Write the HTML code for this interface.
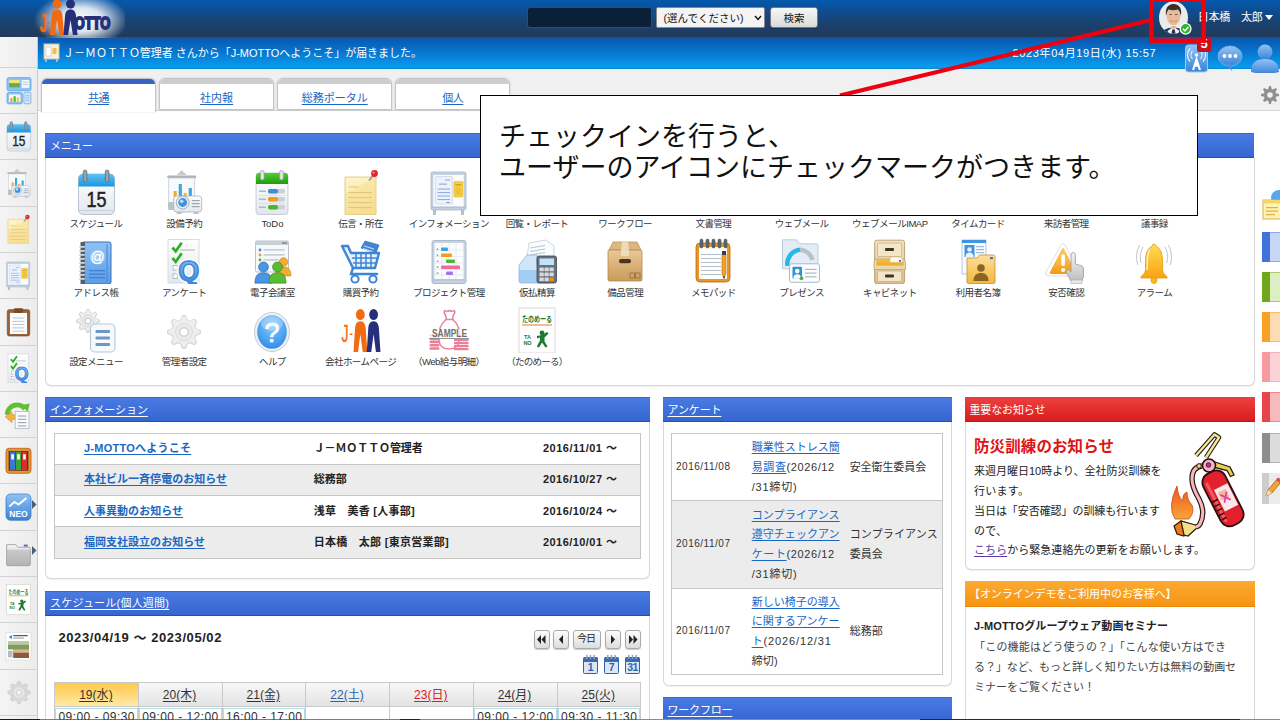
<!DOCTYPE html>
<html lang="ja">
<head>
<meta charset="utf-8">
<title>J-MOTTO</title>
<style>
*{box-sizing:border-box;margin:0;padding:0}
html,body{width:1280px;height:720px;overflow:hidden;background:#fff}
body{font-family:"Liberation Sans","Noto Sans CJK JP",sans-serif;font-size:11px;color:#222;position:relative}
a{color:#1a66c4;text-decoration:underline}
.abs,.t,svg.i{position:absolute}
.t{white-space:nowrap;line-height:20px;height:20px}
.t.c{text-align:center}
.b{font-weight:bold}
.ml{letter-spacing:-.55px}
.u{text-decoration:underline;text-underline-offset:1.5px}
#top{left:0;top:0;width:1280px;height:38px;background:linear-gradient(#0459ad 0,#0c4f98 22%,#1a426f 60%,#22395a 100%)}
#bar{left:37px;top:37px;width:1243px;height:32px;background:linear-gradient(#1b4f8a 0,#0a5ab0 6%,#0674cf 45%,#0a9ced 94%,#0c83c8 100%)}
#side{left:0;top:37px;width:38px;height:683px;background:linear-gradient(90deg,#f4f4f4,#ececec);border-right:1px solid #c9c9c9}
#side i{position:absolute;left:0;width:37px;height:1px;background:#d2d2d2}
#tabbg{left:38px;top:69px;width:1242px;height:42px;background:linear-gradient(#e9f3f9 0,#f0f0f0 3px);border-bottom:1px solid #d4d4d4}
.tab{top:78px;width:115px;height:33px;background:#fff;border:1px solid #c4c4c4;border-bottom:none;border-radius:6px 6px 0 0;overflow:hidden;box-shadow:0 0 2px rgba(0,0,0,.15)}
.tab:before{content:"";position:absolute;left:0;top:0;width:100%;height:5px;background:#cdcdcd}
.tab{height:32px;border-bottom:1px solid #c4c4c4}
.tab.on{height:34px;border-bottom:none}
.tab.on:before{background:#3a62c4}
.ph{height:25px;background:linear-gradient(#4a7be3,#3565d0);box-shadow:inset 0 -1px 0 rgba(20,50,140,.45),inset 0 1px 0 rgba(20,50,140,.25)}
.pb{border:1px solid #d9d9d9;border-top:none;border-radius:0 0 6px 6px;background:#fff;box-shadow:0 1px 1px rgba(0,0,0,.06)}
.tb{border:1px solid #c6c6c6;background:#fff}
.tb i{position:absolute;left:0;width:100%;display:block}
.g{background:#ececec}
.btn{border:1px solid #a9a9a9;border-radius:3px;background:linear-gradient(#fdfdfd,#dcdcdc);box-shadow:0 1px 1px rgba(0,0,0,.2)}
</style>
</head>
<body>

<div id="top" class="abs"></div>
<div id="bar" class="abs"></div>
<div id="side" class="abs"><i style="top:29.7px"></i><i style="top:76.0px"></i><i style="top:122.3px"></i><i style="top:168.6px"></i><i style="top:214.9px"></i><i style="top:261.2px"></i><i style="top:307.5px"></i><i style="top:353.8px"></i><i style="top:400.1px"></i><i style="top:446.4px"></i><i style="top:492.7px"></i><i style="top:539.0px"></i><i style="top:585.3px"></i><i style="top:631.6px"></i><i style="top:677.9px"></i></div>
<svg width="0" height="0" style="position:absolute"><defs>
<linearGradient id="gBlue" x1="0" y1="0" x2="0" y2="1"><stop offset="0" stop-color="#6fc3f2"/><stop offset="1" stop-color="#2f8fdb"/></linearGradient>
<linearGradient id="gBlue2" x1="0" y1="0" x2="0" y2="1"><stop offset="0" stop-color="#8fc4f5"/><stop offset="1" stop-color="#3b82d6"/></linearGradient>
<linearGradient id="gGreen" x1="0" y1="0" x2="0" y2="1"><stop offset="0" stop-color="#7ed957"/><stop offset="1" stop-color="#3d9b1f"/></linearGradient>
<linearGradient id="gWhite" x1="0" y1="0" x2="0" y2="1"><stop offset="0" stop-color="#ffffff"/><stop offset="1" stop-color="#e3e7ec"/></linearGradient>
<linearGradient id="gYel" x1="0" y1="0" x2="1" y2="1"><stop offset="0" stop-color="#fff2b8"/><stop offset="1" stop-color="#f7d774"/></linearGradient>
<linearGradient id="gGray" x1="0" y1="0" x2="0" y2="1"><stop offset="0" stop-color="#f2f2f2"/><stop offset="1" stop-color="#bdbdbd"/></linearGradient>
<linearGradient id="gOr" x1="0" y1="0" x2="0" y2="1"><stop offset="0" stop-color="#ffd36b"/><stop offset="1" stop-color="#f39a12"/></linearGradient>
<linearGradient id="gFo" x1="0" y1="0" x2="0" y2="1"><stop offset="0" stop-color="#fde09a"/><stop offset="1" stop-color="#f4b73e"/></linearGradient>
<linearGradient id="gBell" x1="0" y1="0" x2="0" y2="1"><stop offset="0" stop-color="#ffdc55"/><stop offset="1" stop-color="#f9a312"/></linearGradient>
<linearGradient id="gBox" x1="0" y1="0" x2="0" y2="1"><stop offset="0" stop-color="#e9c896"/><stop offset="1" stop-color="#c99a5b"/></linearGradient>
<linearGradient id="gBeige" x1="0" y1="0" x2="0" y2="1"><stop offset="0" stop-color="#f3e3c2"/><stop offset="1" stop-color="#d9bd8a"/></linearGradient>
<radialGradient id="gGlow"><stop offset="0" stop-color="#fff" stop-opacity="1"/><stop offset=".45" stop-color="#fff" stop-opacity=".85"/><stop offset="1" stop-color="#fff" stop-opacity="0"/></radialGradient>
<radialGradient id="gHelp" cx=".5" cy=".3" r=".8"><stop offset="0" stop-color="#86ccff"/><stop offset="1" stop-color="#2684e2"/></radialGradient>
</defs></svg><svg class="i" style="left:35.0px;top:0.0px" width="90" height="38" viewBox="0 0 90 38" ><ellipse cx="46" cy="20" rx="47" ry="27" fill="url(#gGlow)"/><text x="4.800" y="31.500" font-size="25" font-weight="bold" fill="#f26a12" stroke="#f26a12" stroke-width=".7" font-family="Liberation Sans,Noto Sans CJK JP,sans-serif" textLength="7" lengthAdjust="spacingAndGlyphs">J</text><rect x="12.800" y="22.500" width="2.200" height="1.500" fill="#f26a12"/><g transform="translate(15 -1) scale(1.0 1.0)"><circle cx="7" cy="5" r="4.500" fill="#f26a12"/><circle cx="20.500" cy="5" r="4.500" fill="#26307a"/><path d="M7 10.500c3.800 0 5 2.600 5.400 5.600l1.600 19.900h-4.600l-2.400-15-2.400 15h-4.600l1.600-19.900c.4-3 1.600-5.600 5.400-5.600z" fill="#f26a12"/><path d="M20.500 10.500c3.800 0 5 2.600 5.400 5.600l1.600 19.900h-4.600l-2.400-15-2.400 15h-4.600l1.600-19.900c.4-3 1.600-5.600 5.400-5.600z" fill="#26307a"/></g><text x="39.500" y="29.300" font-size="17" font-weight="bold" fill="#26307a" stroke="#26307a" stroke-width="1.900" font-family="Liberation Sans,Noto Sans CJK JP,sans-serif" textLength="36" lengthAdjust="spacingAndGlyphs">OTTO</text></svg>
<div class="abs" style="left:527px;top:7px;width:125px;height:21px;background:#0a2039;border:1px solid #2b4c7c;border-radius:3px"></div>
<div class="abs" style="left:656px;top:7px;width:109px;height:21px;background:#f4f4f4;border:1px solid #8a8a8a;border-radius:2px"></div>
<svg class="i" style="left:754px;top:14px" width="8" height="8"><path d="M1 2l3 3.5L7 2" fill="none" stroke="#111" stroke-width="1.4"/></svg>
<div class="abs btn" style="left:770px;top:7px;width:48px;height:21px;border-color:#777;background:linear-gradient(#f6f6f6,#dadada)"></div>
<svg class="i" style="left:1158.0px;top:1.0px" width="36" height="36" viewBox="0 0 36 36" ><defs><clipPath id="cpA"><ellipse cx="15.500" cy="16.500" rx="14.500" ry="16.300"/></clipPath></defs><g clip-path="url(#cpA)"><rect width="32" height="36" fill="#ebebeb"/><path d="M3 36q0-9.500 12.500-9.500T28 36z" fill="#1d3558"/><path d="M9.500 30l6-4.500 6 4.500-2.500 4h-7z" fill="#f6f6f6"/><path d="M13 25l2.500 4.500 2.500-4.500z" fill="#e3b595"/><path d="M14.300 28.500h2.400l1.300 6h-5z" fill="#2b3550"/><ellipse cx="15.500" cy="15.500" rx="6.800" ry="8.800" fill="#e8bb9c"/><path d="M8 15q-1.500-11.500 7.500-12Q24.500 3.500 23 15q-1-4.500-3-6.500-5 1.500-9.500 0-1.500 2-2.500 6.500z" fill="#3b2f29"/><path d="M12 19.800q3.500 3 7 0-3.500 1-7 0z" fill="#fff" stroke="#b06f5a" stroke-width=".5"/><path d="M11.500 13.500h2.500M17 13.500h2.500" stroke="#4a3a32" stroke-width=".8"/></g><circle cx="27.600" cy="27.750" r="6" fill="#fff"/><circle cx="27.600" cy="27.750" r="4.700" fill="#2db52d"/><path d="M25 27.800l2 2.200 3.300-4" fill="none" stroke="#fff" stroke-width="1.400"/></svg>
<svg class="i" style="left:1265px;top:15px" width="9" height="6"><path d="M0 0h8L4 5z" fill="#fff"/></svg>
<svg class="i" style="left:43.0px;top:43.0px" width="17" height="20" viewBox="0 0 17 20" ><rect x="1" y="1" width="15" height="15" fill="#f3f1e6" stroke="#c9c2a4" stroke-width="1"/><rect x="3" y="4" width="5" height="9" fill="#fff" stroke="#b9b9b9" stroke-width=".5"/><rect x="9.500" y="5" width="4" height="6" fill="#f3c23c"/><rect x="2" y="16" width="1.800" height="3" fill="#b9b9b9"/><rect x="13" y="16" width="1.800" height="3" fill="#b9b9b9"/></svg>
<svg class="i" style="left:6.0px;top:75.7px" width="26" height="29.5" viewBox="0 0 24 26" preserveAspectRatio="none"><rect x="1" y="1.500" width="22" height="11.500" rx="1.500" fill="#8ec2f2" stroke="#5fa4e6" stroke-width=".8"/><rect x="2.800" y="3.500" width="10" height="6.500" fill="#5fb04a"/><rect x="2.800" y="3.500" width="10" height="2.800" fill="#f6e27a"/><rect x="14.500" y="3.500" width="7" height="7" fill="#f3f7fb"/><rect x="15.500" y="5" width="5" height=".8" fill="#b9c9da"/><rect x="15.500" y="7" width="5" height=".8" fill="#b9c9da"/><rect x="1" y="14.500" width="14" height="10" rx="1.500" fill="#8ec2f2" stroke="#5fa4e6" stroke-width=".8"/><rect x="2.800" y="16.300" width="10.500" height="6.500" fill="#f3f8fd"/><rect x="4" y="19.500" width="2" height="3.300" fill="#f29a1c"/><rect x="7" y="17.800" width="2" height="5" fill="#4cb52e"/><rect x="10" y="18.800" width="2" height="4" fill="#f6c92a"/><rect x="16.500" y="14.500" width="6.500" height="10" rx="1" fill="#cfe2f6" stroke="#7fb4ea" stroke-width=".8"/><rect x="18" y="17" width="3.500" height=".8" fill="#9dbbe0"/><rect x="18" y="19" width="3.500" height=".8" fill="#9dbbe0"/><rect x="18" y="21" width="3.500" height=".8" fill="#9dbbe0"/></svg><svg class="i" style="left:4.3px;top:121.3px" width="29" height="30.3" viewBox="0 0 44 46" ><defs><linearGradient id="gCal" x1="0" y1="0" x2="0" y2="1"><stop offset="0" stop-color="#5cc4f6"/><stop offset="1" stop-color="#1f93df"/></linearGradient></defs><rect x="4.500" y="5" width="36" height="40.500" rx="4.500" fill="url(#gWhite)" stroke="#b3bec9" stroke-width=".9"/><path d="M4.500 17.500V9.500a4.500 4.500 0 0 1 4.500-4.500h27a4.500 4.500 0 0 1 4.500 4.500v8z" fill="url(#gCal)"/><rect x="4.500" y="41" width="36" height="1" fill="#c9d2da"/><rect x="9.300" y="1" width="3.600" height="12" rx="1.800" fill="#9aa3ab" stroke="#5a626a" stroke-width=".7"/><rect x="31.300" y="1" width="3.600" height="12" rx="1.800" fill="#9aa3ab" stroke="#5a626a" stroke-width=".7"/><text x="22.500" y="38" text-anchor="middle" font-size="21.500" fill="#222" stroke="#222" stroke-width=".5" font-family="Liberation Sans,Noto Sans CJK JP,sans-serif" textLength="20" lengthAdjust="spacingAndGlyphs">15</text></svg><svg class="i" style="left:4.3px;top:167.6px" width="29" height="30.3" viewBox="0 0 44 46" ><g transform="translate(-1.300 0)"><path d="M21 1l5 5h-10z" fill="#c8ccd0"/><rect x="6.500" y="6.500" width="29" height="2.500" rx="1" fill="#aab1b8"/><rect x="8" y="9" width="26" height="29" fill="#f7f9fb" stroke="#c5cbd1" stroke-width=".8"/><rect x="13" y="22" width="3" height="9" fill="#f4a62a"/><rect x="18" y="15" width="3.200" height="16" fill="#39a9e0"/><rect x="23" y="24" width="3" height="7" fill="#f4b63a"/><rect x="28" y="19" width="3.200" height="12" fill="#39a9e0"/><rect x="7.500" y="33" width="6" height="8" fill="#b9c1c9"/><rect x="13" y="27" width="28" height="16" rx="3" fill="url(#gWhite)" stroke="#aab2ba" stroke-width=".8"/><rect x="16" y="43" width="5" height="2" fill="#b9c1c9"/><rect x="33" y="43" width="5" height="2" fill="#b9c1c9"/><circle cx="22" cy="33.500" r="6.500" fill="#e6ecf3" stroke="#93a0ad" stroke-width=".8"/><circle cx="22" cy="33.500" r="4.400" fill="#3c93e0"/><circle cx="21" cy="32.300" r="1.800" fill="#bfe0fb"/><rect x="31" y="31" width="8" height="1.200" fill="#9aa4ae"/><rect x="31" y="34" width="8" height="1.200" fill="#9aa4ae"/><rect x="31" y="37" width="8" height="1.200" fill="#9aa4ae"/></g></svg><svg class="i" style="left:4.3px;top:213.9px" width="29" height="30.3" viewBox="0 0 44 46" ><defs><linearGradient id="gMm" x1="0" y1="0" x2=".3" y2="1"><stop offset="0" stop-color="#fef6cf"/><stop offset="1" stop-color="#f8e096"/></linearGradient></defs><path d="M6 8h31v37.500H6z" fill="url(#gMm)" stroke="#dcc377" stroke-width=".8"/><path d="M6 25L37 8v37.500H6z" fill="#f7dc8c" opacity=".45"/><rect x="9.500" y="17.4" width="10" height="1.100" fill="#dfc77d"/><rect x="9.500" y="23" width="23.5" height="1.100" fill="#dfc77d"/><rect x="9.500" y="28" width="23.5" height="1.100" fill="#dfc77d"/><rect x="9.500" y="33" width="23.5" height="1.100" fill="#dfc77d"/><rect x="9.500" y="38" width="23.5" height="1.100" fill="#dfc77d"/><path d="M30 11.500l4-5" stroke="#9a9a9a" stroke-width="1.800"/><circle cx="35.500" cy="4.500" r="3.400" fill="#e3262c"/><circle cx="34.600" cy="3.600" r="1.100" fill="#ff8f8f"/></svg><svg class="i" style="left:4.3px;top:260.2px" width="29" height="30.3" viewBox="0 0 44 46" ><rect x="6" y="40" width="3" height="6" fill="#b4c1cf"/><rect x="34" y="40" width="3" height="6" fill="#b4c1cf"/><rect x="4" y="3" width="35" height="38" rx="1.500" fill="#c3d0df" stroke="#a3b3c6" stroke-width=".7"/><rect x="6.300" y="6" width="30.400" height="32" fill="#fbfcfe"/><rect x="4" y="37.500" width="35" height="1.200" fill="#aebccd"/><rect x="8.300" y="7.500" width="17" height="27.500" rx="1" fill="#edf3fc" stroke="#bccbe0" stroke-width=".6"/><rect x="18" y="10.500" width="5" height="1" fill="#8aa6d6"/><rect x="12" y="14.500" width="8" height="1.300" fill="#9fb2cc"/><rect x="10.500" y="19.5" width="12.500" height="1.100" fill="#8fb0dc"/><rect x="10.500" y="23" width="12.500" height="1.100" fill="#8fb0dc"/><rect x="10.500" y="26.5" width="12.500" height="1.100" fill="#8fb0dc"/><rect x="10.500" y="30" width="12.500" height="1.100" fill="#8fb0dc"/><rect x="19" y="33" width="4" height="1" fill="#8aa6d6"/><rect x="26.800" y="12.400" width="9.200" height="15.600" rx=".8" fill="#f6d044" stroke="#e0b32a" stroke-width=".5"/><rect x="28.500" y="15" width="5.800" height="1.600" fill="#d9a521"/><rect x="28.500" y="18.500" width="5.800" height="7" fill="#eec136"/></svg><svg class="i" style="left:4.3px;top:306.5px" width="29" height="30.3" viewBox="0 0 44 46" ><rect x="5" y="4" width="34" height="40" rx="3" fill="#9a6236" stroke="#6f4322" stroke-width="1"/><rect x="9" y="9" width="26" height="32" fill="#fdfdfd"/><rect x="15" y="2" width="14" height="7" rx="2" fill="#7a4a26"/><rect x="13" y="16" width="18" height="1.400" fill="#b9c0c7"/><rect x="13" y="21" width="18" height="1.400" fill="#b9c0c7"/><rect x="13" y="26" width="18" height="1.400" fill="#b9c0c7"/><rect x="13" y="31" width="18" height="1.400" fill="#b9c0c7"/><rect x="13" y="36" width="18" height="1.400" fill="#b9c0c7"/></svg><svg class="i" style="left:4.3px;top:352.8px" width="29" height="30.3" viewBox="0 0 44 46" ><rect x="6" y="1.500" width="31" height="43.500" fill="url(#gWhite)" stroke="#cdd4db" stroke-width=".8"/><path d="M10.500 9.500l3.200 3.800 6-8.500" fill="none" stroke="#2fb027" stroke-width="2.800"/><path d="M10.500 20l3.200 3.800 6-8.500" fill="none" stroke="#2fb027" stroke-width="2.800"/><rect x="18" y="11.500" width="15" height="1" fill="#aab4be"/><rect x="20" y="21.500" width="10" height="1" fill="#aab4be"/><rect x="11" y="27.500" width="4.500" height="4.500" fill="#fff" stroke="#9ab0ca" stroke-width=".8"/><rect x="11" y="36" width="4.500" height="4.500" fill="#fff" stroke="#9ab0ca" stroke-width=".8"/><text x="26.800" y="41.500" text-anchor="middle" font-size="27" font-weight="bold" fill="#fff" stroke="#fff" stroke-width="5" stroke-linejoin="round" font-family="Liberation Sans,Noto Sans CJK JP,sans-serif">Q</text><text x="26.800" y="41.500" text-anchor="middle" font-size="27" font-weight="bold" fill="url(#gBlue2)" stroke="#3f88da" stroke-width="1.500" stroke-linejoin="round" font-family="Liberation Sans,Noto Sans CJK JP,sans-serif">Q</text></svg><svg class="i" style="left:4.3px;top:399.1px" width="29" height="30.3" viewBox="0 0 44 46" ><path d="M5 24a15 15 0 0 1 27-9" fill="none" stroke="#5fbf35" stroke-width="7.500"/><path d="M27 9l12-2-3 13z" fill="#5fbf35"/><path d="M2 27l10-8v5h8v7h-8v5z" fill="#f4b23c" stroke="#d08a14" stroke-width=".8"/><rect x="17" y="19" width="21" height="26" fill="#fbfcfd" stroke="#aab4be" stroke-width="1.200"/><rect x="21" y="25" width="13" height="1.700" fill="#9aa6b2"/><rect x="21" y="30" width="13" height="1.700" fill="#9aa6b2"/><rect x="21" y="35" width="13" height="1.700" fill="#9aa6b2"/><rect x="21" y="40" width="13" height="1.700" fill="#9aa6b2"/></svg><svg class="i" style="left:4.3px;top:445.4px" width="29" height="30.3" viewBox="0 0 44 46" ><rect x="3" y="5" width="38" height="38" rx="5" fill="#f0932b" stroke="#a9601a" stroke-width="1.200"/><rect x="7" y="9" width="30" height="30" fill="#4a3626"/><rect x="9" y="10" width="8" height="28" fill="#3b78d6"/><rect x="18" y="10" width="8" height="28" fill="#3fa33a"/><rect x="27" y="10" width="8" height="28" fill="#d62f2f"/><rect x="11" y="14" width="4" height="8" fill="#fff"/><rect x="20" y="14" width="4" height="8" fill="#fff"/><rect x="29" y="14" width="4" height="8" fill="#fff"/></svg><svg class="i" style="left:4.3px;top:491.7px" width="29" height="30.3" viewBox="0 0 44 46" ><rect x="3" y="3" width="38" height="40" rx="7" fill="url(#gBlue2)" stroke="#2f6fc0" stroke-width="1"/><path d="M8 22l8-7 6 4 12-10" fill="none" stroke="#fff" stroke-width="3"/><text x="22" y="38" text-anchor="middle" font-size="13" font-weight="bold" fill="#fff" font-family="Liberation Sans,Noto Sans CJK JP,sans-serif">NEO</text></svg><svg class="i" style="left:4.3px;top:538.0px" width="29" height="30.3" viewBox="0 0 44 46" ><path d="M4 10h14l3 4h17a2 2 0 0 1 2 2v24a2 2 0 0 1-2 2H6a2 2 0 0 1-2-2z" fill="url(#gGray)" stroke="#8a8a8a" stroke-width="1"/><path d="M4 18h36v22a2 2 0 0 1-2 2H6a2 2 0 0 1-2-2z" fill="#a9a9a9" opacity=".45"/><rect x="30" y="10" width="6" height="3" fill="#5570b8"/></svg><svg class="i" style="left:4.3px;top:584.3px" width="29" height="30.3" viewBox="0 0 44 46" ><rect x="4" y="1" width="36" height="45" fill="#fff" stroke="#cfcfcf" stroke-width=".8"/><text x="22" y="14.500" text-anchor="middle" font-size="8" font-weight="bold" fill="#1e7a2e" font-family="Liberation Sans,Noto Sans CJK JP,sans-serif" textLength="30" lengthAdjust="spacingAndGlyphs">たのめーる</text><rect x="7" y="17.500" width="30" height="1" fill="#e8772a"/><text x="12.500" y="32" text-anchor="middle" font-size="5.500" font-weight="bold" fill="#1e7a2e" font-family="Liberation Sans,Noto Sans CJK JP,sans-serif">TA</text><text x="12.500" y="38" text-anchor="middle" font-size="5.500" font-weight="bold" fill="#1e7a2e" font-family="Liberation Sans,Noto Sans CJK JP,sans-serif">NO</text><circle cx="27" cy="26" r="2.400" fill="#1e7a2e"/><path d="M22 29l5-1 5-3 1.500 1.500-4 4v4l3 5-2 1-3.500-5-3 5-2.200-1 3.200-6v-3l-3 1z" fill="#1e7a2e"/></svg><svg class="i" style="left:4.3px;top:630.6px" width="29" height="30.3" viewBox="0 0 44 46" ><rect x="3" y="2" width="38" height="42" fill="#fff" stroke="#d0d0d0" stroke-width=".8"/><path d="M7 9l5-3v6z" fill="#2f8fdb"/><rect x="14" y="6" width="22" height="2" fill="#55606b"/><rect x="14" y="10" width="16" height="1.500" fill="#8a949e"/><rect x="6" y="16" width="32" height="12" fill="#7f9a62"/><rect x="6" y="16" width="32" height="5" fill="#b9c9a0"/><rect x="14" y="28" width="24" height="13" fill="#8a5b3c"/><rect x="14" y="28" width="24" height="5" fill="#d9b68c"/><rect x="6" y="30" width="7" height="10" fill="#b5bcc4"/></svg><svg class="i" style="left:6.0px;top:679.1px" width="26" height="27" viewBox="0 0 44 46" ><path d="M40.9 21.1L40.9 24.9L35.4 27.1L34.3 29.6L36.7 35.1L34.1 37.7L28.6 35.3L26.1 36.4L23.9 41.9L20.1 41.9L17.9 36.4L15.4 35.3L9.9 37.7L7.3 35.1L9.7 29.6L8.6 27.1L3.1 24.9L3.1 21.1L8.6 18.9L9.7 16.4L7.3 10.9L9.9 8.3L15.4 10.7L17.9 9.6L20.1 4.1L23.9 4.1L26.1 9.6L28.6 10.7L34.1 8.3L36.7 10.9L34.3 16.4L35.4 18.9z" fill="#d9d9d9" stroke="#c2c2c2" stroke-width="1"/><circle cx="22" cy="23" r="10" fill="#e6e6e6" stroke="#cdcdcd" stroke-width=".8"/><circle cx="22" cy="23" r="4.500" fill="#f4f4f4" stroke="#c2c2c2" stroke-width="1.200"/></svg><svg class="i" style="left:31.5px;top:499.9px" width="5" height="9" viewBox="0 0 5 9" ><path d="M0 0l4.500 4.500L0 9z" fill="#4b5f7a"/></svg><svg class="i" style="left:31.5px;top:546.2px" width="5" height="9" viewBox="0 0 5 9" ><path d="M0 0l4.500 4.500L0 9z" fill="#4b5f7a"/></svg>
<div id="tabbg" class="abs"></div>
<div class="abs tab on" style="left:41.0px"></div>
<div class="abs tab" style="left:159.1px"></div>
<div class="abs tab" style="left:277.2px"></div>
<div class="abs tab" style="left:395.3px"></div>
<svg class="i" style="left:1260.0px;top:85.0px" width="20" height="20" viewBox="0 0 20 20" ><path d="M19.0 9.1L19.0 10.9L15.9 11.8L15.5 12.9L17.0 15.7L15.7 17.0L12.9 15.5L11.8 15.9L10.9 19.0L9.1 19.0L8.2 15.9L7.1 15.5L4.3 17.0L3.0 15.7L4.5 12.9L4.1 11.8L1.0 10.9L1.0 9.1L4.1 8.2L4.5 7.1L3.0 4.3L4.3 3.0L7.1 4.5L8.2 4.1L9.1 1.0L10.9 1.0L11.8 4.1L12.9 4.5L15.7 3.0L17.0 4.3L15.5 7.1L15.9 8.2z" fill="#8f8f8f"/><circle cx="10" cy="10" r="2.800" fill="#f0f0f0"/></svg>
<svg class="i" style="left:1185.0px;top:44.0px" width="24" height="30" viewBox="0 0 24 30" ><rect x=".5" y="1" width="22" height="27" rx="3" fill="url(#gBlue2)" stroke="#9cc9f2" stroke-width="1"/><path d="M11.500 12l-4.500 14h2.200l1-3.200h2.600l1 3.200h2.200z" fill="#fff"/><circle cx="11.500" cy="11" r="1.700" fill="#fff"/><path d="M7.500 7a6 6 0 0 0 0 8M5 4.500a9.500 9.500 0 0 0 0 13M15.500 7a6 6 0 0 1 0 8M18 4.500a9.500 9.500 0 0 1 0 13" fill="none" stroke="#e6f3ff" stroke-width="1.200"/></svg><div class="abs" style="left:1197px;top:37px;width:14px;height:15px;background:#c8101c;border-radius:2px"></div><div class="t b" style="left:1200.500px;top:34px;color:#fff;font-size:13px">5</div><svg class="i" style="left:1217.0px;top:45.0px" width="26" height="28" viewBox="0 0 26 28" ><ellipse cx="13" cy="11" rx="12" ry="10" fill="url(#gBlue2)" stroke="#7db6ee" stroke-width=".8"/><path d="M9 19q3 4 6 7-1-4 0-7z" fill="#4a90dd"/><circle cx="7.500" cy="11" r="1.900" fill="#fff"/><circle cx="13" cy="11" r="1.900" fill="#fff"/><circle cx="18.500" cy="11" r="1.900" fill="#fff"/></svg><svg class="i" style="left:1251.0px;top:43.0px" width="29" height="30" viewBox="0 0 29 30" ><circle cx="14" cy="9" r="7.500" fill="url(#gBlue2)"/><path d="M0 29q0-13 14-13t14 13q-14 4-28 0z" fill="url(#gBlue2)"/></svg>
<div class="abs ph" style="left:45px;top:133px;width:1209px"></div>
<div class="abs pb" style="left:45px;top:158px;width:1210px;height:228px"></div>
<svg class="i" style="left:74.0px;top:169.0px" width="44" height="46" viewBox="0 0 44 46" ><defs><linearGradient id="gCal" x1="0" y1="0" x2="0" y2="1"><stop offset="0" stop-color="#5cc4f6"/><stop offset="1" stop-color="#1f93df"/></linearGradient></defs><rect x="4.500" y="5" width="36" height="40.500" rx="4.500" fill="url(#gWhite)" stroke="#b3bec9" stroke-width=".9"/><path d="M4.500 17.500V9.500a4.500 4.500 0 0 1 4.500-4.500h27a4.500 4.500 0 0 1 4.500 4.500v8z" fill="url(#gCal)"/><rect x="4.500" y="41" width="36" height="1" fill="#c9d2da"/><rect x="9.300" y="1" width="3.600" height="12" rx="1.800" fill="#9aa3ab" stroke="#5a626a" stroke-width=".7"/><rect x="31.300" y="1" width="3.600" height="12" rx="1.800" fill="#9aa3ab" stroke="#5a626a" stroke-width=".7"/><text x="22.500" y="38" text-anchor="middle" font-size="21.500" fill="#222" stroke="#222" stroke-width=".5" font-family="Liberation Sans,Noto Sans CJK JP,sans-serif" textLength="20" lengthAdjust="spacingAndGlyphs">15</text></svg>
<svg class="i" style="left:162.2px;top:169.0px" width="44" height="46" viewBox="0 0 44 46" ><g transform="translate(-1.300 0)"><path d="M21 1l5 5h-10z" fill="#c8ccd0"/><rect x="6.500" y="6.500" width="29" height="2.500" rx="1" fill="#aab1b8"/><rect x="8" y="9" width="26" height="29" fill="#f7f9fb" stroke="#c5cbd1" stroke-width=".8"/><rect x="13" y="22" width="3" height="9" fill="#f4a62a"/><rect x="18" y="15" width="3.200" height="16" fill="#39a9e0"/><rect x="23" y="24" width="3" height="7" fill="#f4b63a"/><rect x="28" y="19" width="3.200" height="12" fill="#39a9e0"/><rect x="7.500" y="33" width="6" height="8" fill="#b9c1c9"/><rect x="13" y="27" width="28" height="16" rx="3" fill="url(#gWhite)" stroke="#aab2ba" stroke-width=".8"/><rect x="16" y="43" width="5" height="2" fill="#b9c1c9"/><rect x="33" y="43" width="5" height="2" fill="#b9c1c9"/><circle cx="22" cy="33.500" r="6.500" fill="#e6ecf3" stroke="#93a0ad" stroke-width=".8"/><circle cx="22" cy="33.500" r="4.400" fill="#3c93e0"/><circle cx="21" cy="32.300" r="1.800" fill="#bfe0fb"/><rect x="31" y="31" width="8" height="1.200" fill="#9aa4ae"/><rect x="31" y="34" width="8" height="1.200" fill="#9aa4ae"/><rect x="31" y="37" width="8" height="1.200" fill="#9aa4ae"/></g></svg>
<svg class="i" style="left:250.4px;top:169.0px" width="44" height="46" viewBox="0 0 44 46" ><defs><linearGradient id="gTd" x1="0" y1="0" x2="0" y2="1"><stop offset="0" stop-color="#4fd12c"/><stop offset="1" stop-color="#1f9a10"/></linearGradient></defs><rect x="6" y="4" width="32" height="41.500" rx="3" fill="url(#gWhite)" stroke="#b9c3cc" stroke-width=".8"/><path d="M6 15V7a3 3 0 0 1 3-3h26a3 3 0 0 1 3 3v8z" fill="url(#gTd)"/><rect x="10.500" y="1.500" width="3.600" height="9.500" rx="1.800" fill="#e3e7ea" stroke="#8f979e" stroke-width=".7"/><rect x="29.700" y="1.500" width="3.600" height="9.500" rx="1.800" fill="#e3e7ea" stroke="#8f979e" stroke-width=".7"/><rect x="9" y="21.5" width="7" height="1.400" fill="#9bb7d3"/><rect x="18" y="20" width="17" height="4.400" rx="2" fill="#c9d0d7"/><rect x="18" y="20" width="10" height="4.400" rx="2" fill="#3c8fdc"/><rect x="8" y="26.2" width="28" height=".7" fill="#cfe0ee"/><rect x="9" y="29.5" width="7" height="1.400" fill="#9bb7d3"/><rect x="18" y="28" width="17" height="4.400" rx="2" fill="#c9d0d7"/><rect x="18" y="28" width="10" height="4.400" rx="2" fill="#f29a1c"/><rect x="8" y="34.2" width="28" height=".7" fill="#cfe0ee"/><rect x="9" y="37.5" width="7" height="1.400" fill="#9bb7d3"/><rect x="18" y="36" width="17" height="4.400" rx="2" fill="#c9d0d7"/><rect x="18" y="36" width="10" height="4.400" rx="2" fill="#4cb52e"/></svg>
<svg class="i" style="left:338.6px;top:169.0px" width="44" height="46" viewBox="0 0 44 46" ><defs><linearGradient id="gMm" x1="0" y1="0" x2=".3" y2="1"><stop offset="0" stop-color="#fef6cf"/><stop offset="1" stop-color="#f8e096"/></linearGradient></defs><path d="M6 8h31v37.500H6z" fill="url(#gMm)" stroke="#dcc377" stroke-width=".8"/><path d="M6 25L37 8v37.500H6z" fill="#f7dc8c" opacity=".45"/><rect x="9.500" y="17.4" width="10" height="1.100" fill="#dfc77d"/><rect x="9.500" y="23" width="23.5" height="1.100" fill="#dfc77d"/><rect x="9.500" y="28" width="23.5" height="1.100" fill="#dfc77d"/><rect x="9.500" y="33" width="23.5" height="1.100" fill="#dfc77d"/><rect x="9.500" y="38" width="23.5" height="1.100" fill="#dfc77d"/><path d="M30 11.500l4-5" stroke="#9a9a9a" stroke-width="1.800"/><circle cx="35.500" cy="4.500" r="3.400" fill="#e3262c"/><circle cx="34.600" cy="3.600" r="1.100" fill="#ff8f8f"/></svg>
<svg class="i" style="left:426.8px;top:169.0px" width="44" height="46" viewBox="0 0 44 46" ><rect x="6" y="40" width="3" height="6" fill="#b4c1cf"/><rect x="34" y="40" width="3" height="6" fill="#b4c1cf"/><rect x="4" y="3" width="35" height="38" rx="1.500" fill="#c3d0df" stroke="#a3b3c6" stroke-width=".7"/><rect x="6.300" y="6" width="30.400" height="32" fill="#fbfcfe"/><rect x="4" y="37.500" width="35" height="1.200" fill="#aebccd"/><rect x="8.300" y="7.500" width="17" height="27.500" rx="1" fill="#edf3fc" stroke="#bccbe0" stroke-width=".6"/><rect x="18" y="10.500" width="5" height="1" fill="#8aa6d6"/><rect x="12" y="14.500" width="8" height="1.300" fill="#9fb2cc"/><rect x="10.500" y="19.5" width="12.500" height="1.100" fill="#8fb0dc"/><rect x="10.500" y="23" width="12.500" height="1.100" fill="#8fb0dc"/><rect x="10.500" y="26.5" width="12.500" height="1.100" fill="#8fb0dc"/><rect x="10.500" y="30" width="12.500" height="1.100" fill="#8fb0dc"/><rect x="19" y="33" width="4" height="1" fill="#8aa6d6"/><rect x="26.800" y="12.400" width="9.200" height="15.600" rx=".8" fill="#f6d044" stroke="#e0b32a" stroke-width=".5"/><rect x="28.500" y="15" width="5.800" height="1.600" fill="#d9a521"/><rect x="28.500" y="18.500" width="5.800" height="7" fill="#eec136"/></svg>








<svg class="i" style="left:74.0px;top:238.0px" width="44" height="46" viewBox="0 0 44 46" ><defs><linearGradient id="gAd" x1="0" y1="0" x2="0" y2="1"><stop offset="0" stop-color="#8fc2f6"/><stop offset="1" stop-color="#5a9de8"/></linearGradient></defs><path d="M9 4h26a2 2 0 0 1 2 2v38a2 2 0 0 1-2 2H9z" fill="url(#gAd)" stroke="#3d6fb4" stroke-width="1"/><path d="M33 6v38" stroke="#4a84cf" stroke-width="1"/><rect x="6.500" y="4" width="4.500" height="42" fill="#56606b"/><rect x="5" y="8" width="6" height="1.700" rx=".8" fill="#cfd5db"/><rect x="5" y="12" width="6" height="1.700" rx=".8" fill="#cfd5db"/><rect x="5" y="16" width="6" height="1.700" rx=".8" fill="#cfd5db"/><rect x="5" y="20" width="6" height="1.700" rx=".8" fill="#cfd5db"/><rect x="5" y="24" width="6" height="1.700" rx=".8" fill="#cfd5db"/><rect x="5" y="28" width="6" height="1.700" rx=".8" fill="#cfd5db"/><rect x="5" y="32" width="6" height="1.700" rx=".8" fill="#cfd5db"/><rect x="5" y="36" width="6" height="1.700" rx=".8" fill="#cfd5db"/><rect x="5" y="40" width="6" height="1.700" rx=".8" fill="#cfd5db"/><circle cx="23.500" cy="19" r="7.500" fill="#a9d0f8" opacity=".8"/><text x="23.500" y="24" text-anchor="middle" font-size="14" fill="#fff" stroke="#fff" stroke-width=".3" font-family="Liberation Sans,Noto Sans CJK JP,sans-serif">@</text><rect x="15" y="32" width="16" height="1.300" fill="#3f7fd0"/><rect x="15" y="35.500" width="16" height="1.300" fill="#3f7fd0"/><rect x="15" y="39" width="16" height="1.300" fill="#3f7fd0"/></svg>
<svg class="i" style="left:162.2px;top:238.0px" width="44" height="46" viewBox="0 0 44 46" ><rect x="6" y="1.500" width="31" height="43.500" fill="url(#gWhite)" stroke="#cdd4db" stroke-width=".8"/><path d="M10.500 9.500l3.200 3.800 6-8.500" fill="none" stroke="#2fb027" stroke-width="2.800"/><path d="M10.500 20l3.200 3.800 6-8.500" fill="none" stroke="#2fb027" stroke-width="2.800"/><rect x="18" y="11.500" width="15" height="1" fill="#aab4be"/><rect x="20" y="21.500" width="10" height="1" fill="#aab4be"/><rect x="11" y="27.500" width="4.500" height="4.500" fill="#fff" stroke="#9ab0ca" stroke-width=".8"/><rect x="11" y="36" width="4.500" height="4.500" fill="#fff" stroke="#9ab0ca" stroke-width=".8"/><text x="26.800" y="41.500" text-anchor="middle" font-size="27" font-weight="bold" fill="#fff" stroke="#fff" stroke-width="5" stroke-linejoin="round" font-family="Liberation Sans,Noto Sans CJK JP,sans-serif">Q</text><text x="26.800" y="41.500" text-anchor="middle" font-size="27" font-weight="bold" fill="url(#gBlue2)" stroke="#3f88da" stroke-width="1.500" stroke-linejoin="round" font-family="Liberation Sans,Noto Sans CJK JP,sans-serif">Q</text></svg>
<svg class="i" style="left:250.4px;top:238.0px" width="44" height="46" viewBox="0 0 44 46" ><rect x="5.500" y="3" width="33" height="31" rx="1.500" fill="#f6f8fb" stroke="#aab4be" stroke-width=".8"/><rect x="5.500" y="3" width="33" height="4" fill="#c7d0d9"/><rect x="32" y="4" width="5" height="2" fill="#8f9aa6"/><circle cx="10" cy="12" r="1.400" fill="#3c8fdc"/><circle cx="10" cy="17" r="1.400" fill="#f29a1c"/><circle cx="10" cy="22" r="1.400" fill="#4cb52e"/><rect x="13.500" y="11.300" width="21" height="1.200" fill="#b4bec8"/><rect x="13.500" y="16.300" width="21" height="1.200" fill="#b4bec8"/><rect x="13.500" y="21.300" width="15" height="1.200" fill="#b4bec8"/><circle cx="33.5" cy="24" r="4.264" fill="#f4ac2e" stroke="#c27d0c" stroke-width=".6"/><path d="M26.12 37.94c0-6.56 2.46-9.02 7.38-9.02s7.38 2.46 7.38 9.02z" fill="#f4ac2e" stroke="#c27d0c" stroke-width=".6"/><circle cx="13.5" cy="29" r="4.9399999999999995" fill="#4a96e4" stroke="#1f5fae" stroke-width=".6"/><path d="M4.950000000000001 45.15c0-7.6 2.8499999999999996-10.45 8.549999999999999-10.45s8.549999999999999 2.8499999999999996 8.549999999999999 10.45z" fill="#4a96e4" stroke="#1f5fae" stroke-width=".6"/><circle cx="27.5" cy="29" r="4.9399999999999995" fill="#5cbb36" stroke="#2f8414" stroke-width=".6"/><path d="M18.950000000000003 45.15c0-7.6 2.8499999999999996-10.45 8.549999999999999-10.45s8.549999999999999 2.8499999999999996 8.549999999999999 10.45z" fill="#5cbb36" stroke="#2f8414" stroke-width=".6"/></svg>
<svg class="i" style="left:338.6px;top:238.0px" width="44" height="46" viewBox="0 0 44 46" ><path d="M22 10l4-7 14 4-3 8z" fill="#3f86d8" stroke="#2a63ad" stroke-width=".6"/><path d="M25 8l10 3M24 10.5l10 3" stroke="#cfe2f7" stroke-width="1"/><path d="M3 8h6l3 7h28l-4 15H14z" fill="#e9f2fc" stroke="#3c86d9" stroke-width="2.4" stroke-linejoin="round"/><path d="M17 15v15M22 15v15M27 15v15M32 15v15M13 20h25M14 25h23" stroke="#3c86d9" stroke-width="1.5"/><path d="M14 30l-2 6h26" fill="none" stroke="#3c86d9" stroke-width="2.4" stroke-linecap="round"/><circle cx="16" cy="41" r="3.6" fill="#fff" stroke="#3c86d9" stroke-width="2"/><circle cx="34" cy="41" r="3.6" fill="#fff" stroke="#3c86d9" stroke-width="2"/></svg>
<svg class="i" style="left:426.8px;top:238.0px" width="44" height="46" viewBox="0 0 44 46" ><rect x="5" y="2.500" width="34" height="43" rx="2" fill="#c5d2e2" stroke="#9fb0c4" stroke-width=".8"/><rect x="7.500" y="5" width="29" height="36" fill="#fbfcfe"/><path d="M15 5v36M22 5v36M29 5v36M7.500 12h29M7.500 18.500h29M7.500 25h29M7.500 31.500h29M7.500 37h29" stroke="#dfe5ec" stroke-width=".7"/><rect x="5" y="41.500" width="34" height="1" fill="#aebccd"/><rect x="14" y="9.5" width="7" height="3.400" rx="1" fill="#36a8e0"/><circle cx="10.500" cy="11.2" r=".9" fill="#8fa1b5"/><rect x="14" y="15.5" width="11" height="3.400" rx="1" fill="#f59b1d"/><circle cx="10.500" cy="17.2" r=".9" fill="#8fa1b5"/><rect x="19" y="21.5" width="9" height="3.400" rx="1" fill="#4fb82f"/><circle cx="10.500" cy="23.2" r=".9" fill="#8fa1b5"/><rect x="14" y="27.5" width="19" height="3.400" rx="1" fill="#f36aa0"/><circle cx="10.500" cy="29.2" r=".9" fill="#8fa1b5"/><rect x="19" y="33.5" width="7" height="3.400" rx="1" fill="#a774e6"/><circle cx="10.500" cy="35.2" r=".9" fill="#8fa1b5"/></svg>
<svg class="i" style="left:515.0px;top:238.0px" width="44" height="46" viewBox="0 0 44 46" ><path d="M14 5l17-3 8 6v26H10z" fill="#fbfcfd" stroke="#c4ccd4" stroke-width=".8"/><path d="M15 10l15-2.500" stroke="#b8c2cc" stroke-width="1"/><path d="M15 13.5l15-2.500" stroke="#b8c2cc" stroke-width="1"/><path d="M15 17l15-2.500" stroke="#b8c2cc" stroke-width="1"/><path d="M15 20.5l15-2.500" stroke="#b8c2cc" stroke-width="1"/><path d="M15 24l15-2.500" stroke="#b8c2cc" stroke-width="1"/><path d="M4 27l8-10h10v9h14v17a2 2 0 0 1-2 2H6a2 2 0 0 1-2-2z" fill="#cfe6f9" stroke="#86b9e6" stroke-width=".8"/><path d="M4 32h31v13H6a2 2 0 0 1-2-2z" fill="#7db9ee" opacity=".55"/><rect x="22" y="18" width="19.500" height="27" rx="2" fill="#6b7178" stroke="#3f454b" stroke-width=".8"/><rect x="24.500" y="20.500" width="14.500" height="6.500" fill="#bfe3fb"/><rect x="24.5" y="29.5" width="4.300" height="3.800" rx=".6" fill="#d7dbdf"/><rect x="24.5" y="34.5" width="4.300" height="3.800" rx=".6" fill="#d7dbdf"/><rect x="24.5" y="39.5" width="4.300" height="3.800" rx=".6" fill="#d7dbdf"/><rect x="29.5" y="29.5" width="4.300" height="3.800" rx=".6" fill="#d7dbdf"/><rect x="29.5" y="34.5" width="4.300" height="3.800" rx=".6" fill="#d7dbdf"/><rect x="29.5" y="39.5" width="4.300" height="3.800" rx=".6" fill="#d7dbdf"/><rect x="34.5" y="29.5" width="4.300" height="3.800" rx=".6" fill="#d7dbdf"/><rect x="34.5" y="34.5" width="4.300" height="3.800" rx=".6" fill="#d7dbdf"/><rect x="34.5" y="39.5" width="4.300" height="3.800" rx=".6" fill="#f28c1a"/></svg>
<svg class="i" style="left:603.2px;top:238.0px" width="44" height="46" viewBox="0 0 44 46" ><path d="M6 12l4-8h24l4 8z" fill="#dcb880" stroke="#b48a4d" stroke-width=".7"/><rect x="5" y="12" width="34" height="31" rx="1.5" fill="url(#gBox)" stroke="#b48a4d" stroke-width=".8"/><path d="M19 4h6l1 8v6h-8v-6z" fill="#f1dfbd" opacity=".9"/><rect x="16" y="21" width="12" height="4.2" rx="2" fill="#4a3622"/><rect x="27" y="35" width="4.5" height="5" fill="none" stroke="#8a6838" stroke-width=".7"/><rect x="32.5" y="35" width="4.5" height="5" fill="none" stroke="#8a6838" stroke-width=".7"/></svg>
<svg class="i" style="left:691.4px;top:238.0px" width="44" height="46" viewBox="0 0 44 46" ><rect x="5" y="5" width="34" height="39" rx="4" fill="#e9952a" stroke="#b96a0e" stroke-width=".8"/><rect x="8" y="9" width="28" height="32" rx="1.5" fill="#fdfdfd"/><rect x="10" y="16" width="20" height=".9" fill="#aeb8c2"/><rect x="10" y="20" width="20" height=".9" fill="#aeb8c2"/><rect x="10" y="24" width="20" height=".9" fill="#aeb8c2"/><rect x="10" y="28" width="20" height=".9" fill="#aeb8c2"/><rect x="10" y="32" width="20" height=".9" fill="#aeb8c2"/><rect x="10" y="36" width="20" height=".9" fill="#aeb8c2"/><rect x="9" y="1" width="3" height="9" rx="1.5" fill="#5d6770" stroke="#3b4249" stroke-width=".5"/><rect x="15" y="1" width="3" height="9" rx="1.5" fill="#5d6770" stroke="#3b4249" stroke-width=".5"/><rect x="21" y="1" width="3" height="9" rx="1.5" fill="#5d6770" stroke="#3b4249" stroke-width=".5"/><rect x="27" y="1" width="3" height="9" rx="1.5" fill="#5d6770" stroke="#3b4249" stroke-width=".5"/><rect x="33" y="1" width="3" height="9" rx="1.5" fill="#5d6770" stroke="#3b4249" stroke-width=".5"/><path d="M31 16h4v20l-2 4-2-4z" fill="#f6a21e" stroke="#b7700c" stroke-width=".6"/><rect x="31" y="13" width="4" height="4" fill="#3a3f45"/><path d="M31.8 38.5l1.2 2.4 1.2-2.4z" fill="#333"/></svg>
<svg class="i" style="left:779.6px;top:238.0px" width="44" height="46" viewBox="0 0 44 46" ><g transform="translate(-1.500 -1.200)"><path d="M4 3h14l3 4h17a1.500 1.500 0 0 1 1.500 1.500V32H4z" fill="#e3ecf5" stroke="#b2c2d2" stroke-width=".8"/><path d="M9 29a14 14 0 0 1 13-16" fill="none" stroke="#25b9e3" stroke-width="4.500"/><path d="M22 13a14 14 0 0 1 12 10" fill="none" stroke="#b8c0c8" stroke-width="4.500"/><rect x="11" y="27" width="30" height="18.500" rx="2" fill="#fafcfe" stroke="#9fb3c8" stroke-width=".9"/><rect x="14" y="30" width="9.500" height="12" rx="1" fill="#2f8fdb"/><circle cx="18.700" cy="34.300" r="2.300" fill="#fff"/><path d="M14.800 42c0-3.200 1.600-4.600 3.900-4.600s3.900 1.400 3.900 4.600z" fill="#fff"/><circle cx="23" cy="41.500" r="1.900" fill="#4cb52e"/><rect x="26.500" y="32" width="11.500" height="1.200" fill="#a9b9ca"/><rect x="26.500" y="35.700" width="11.500" height="1.200" fill="#a9b9ca"/><rect x="26.500" y="39.400" width="11.500" height="1.200" fill="#a9b9ca"/></g></svg>
<svg class="i" style="left:867.8px;top:238.0px" width="44" height="46" viewBox="0 0 44 46" ><rect x="6.600" y="2.200" width="30" height="43.600" rx="2.500" fill="url(#gBeige)" stroke="#b79d6c" stroke-width=".9"/><rect x="9.500" y="5" width="24.200" height="13.500" rx="1" fill="#f3e6c8" stroke="#c3aa78" stroke-width=".7"/><rect x="17" y="10" width="9" height="3" rx="1" fill="#3f3423"/><path d="M7.500 21h28.500l1.500 3v7.500h-31.500V24z" fill="#e9d7ae" stroke="#b8a070" stroke-width=".7"/><path d="M8.500 27.500h27V23l-1-2h-25l-1 2z" fill="#f3b93a"/><path d="M22 21l1.500-2h9l2 2.500v3h-12.500z" fill="#fdf8ea" stroke="#cdbb90" stroke-width=".5"/><rect x="31" y="22" width="2" height="1.800" fill="#4a5fb8"/><path d="M8.500 24.500h27v3h-27z" fill="#f0a92a" opacity=".6"/><rect x="9.500" y="33" width="24.200" height="10.500" rx="1" fill="#f3e6c8" stroke="#c3aa78" stroke-width=".7"/><rect x="17" y="36.500" width="9" height="3" rx="1" fill="#3f3423"/></svg>
<svg class="i" style="left:956.0px;top:238.0px" width="44" height="46" viewBox="0 0 44 46" ><rect x="6" y="2" width="24" height="34" fill="#f8fbfe" stroke="#9dbbe0" stroke-width=".8"/><rect x="6" y="2" width="24" height="3" fill="#3f95e0"/><rect x="8.500" y="7" width="10" height="12" fill="#3f95e0"/><circle cx="13.500" cy="11.500" r="2.300" fill="#e6f2fd"/><path d="M9.500 19c0-3.200 1.600-4.600 4-4.600s4 1.400 4 4.600z" fill="#e6f2fd"/><rect x="20" y="8" width="8" height="1.200" fill="#9dbbe0"/><rect x="20" y="11" width="8" height="1.200" fill="#9dbbe0"/><rect x="20" y="14" width="8" height="1.200" fill="#9dbbe0"/><path d="M11 20h10l2.500-3h14a1.500 1.500 0 0 1 1.500 1.500V44a1.500 1.500 0 0 1-1.500 1.500h-25A1.500 1.500 0 0 1 11 44z" fill="url(#gFo)" stroke="#c4922c" stroke-width=".8"/><circle cx="25" cy="30" r="3.800" fill="#8a6424"/><path d="M17.500 43c0-5.500 3-8 7.500-8s7.500 2.500 7.500 8z" fill="#8a6424"/><rect x="34" y="19" width="3" height="2.200" fill="#5570b8"/></svg>
<svg class="i" style="left:1044.2px;top:238.0px" width="44" height="46" viewBox="0 0 44 46" ><g transform="translate(0 3)"><path d="M17 4q2-3 4 0l14 27q1.500 4-3 4H5q-4.500 0-3-4z" fill="#fff" stroke="#d7d7d7" stroke-width=".8"/><path d="M18 8q1-1.800 2 0l12 23q.8 2-1.500 2H7.500q-2.300 0-1.500-2z" fill="url(#gOr)"/><path d="M18 8q1-1.800 2 0l6 12q-10 2-16 8z" fill="#ffb347" opacity=".5"/><rect x="17.300" y="13" width="3.600" height="12" rx="1.800" fill="#fff"/><circle cx="19.100" cy="29" r="2.100" fill="#fff"/><path d="M27 14q0-2.500 2.200-2.500T31.400 14v9l5.500 1.500q2.600.8 2.600 3.500v8l-2 5h-10l-5-9q-1-2.200.8-3t3.200 1.200l.5.800z" fill="url(#gGray)" stroke="#9b9b9b" stroke-width=".8"/><rect x="27" y="39" width="11" height="3.500" fill="#e9e9e9" stroke="#a9a9a9" stroke-width=".6"/></g></svg>
<svg class="i" style="left:1132.4px;top:238.0px" width="44" height="46" viewBox="0 0 44 46" ><g transform="translate(3.300 3) scale(.85 1)"><path d="M9 6q-5 7-2 16M5 4q-6 9-2 20M35 6q5 7 2 16M39 4q6 9 2 20" fill="none" stroke="#c3c9cf" stroke-width="1.200"/><circle cx="22" cy="39" r="3.600" fill="#fbb51e" stroke="#d98d12" stroke-width=".6"/><path d="M22 3q2 0 2.400 2.400Q32 8 32 20v9q0 3 4 5.500 1.500 1 1.500 2.500H6.500q0-1.500 1.500-2.500Q12 32 12 29v-9Q12 8 19.600 5.400 20 3 22 3z" fill="url(#gBell)" stroke="#e79a10" stroke-width=".9"/><path d="M17 9q-3 4-3 12v8" fill="none" stroke="#fff0c2" stroke-width="2.200" opacity=".8"/></g></svg>
<svg class="i" style="left:74.0px;top:307.0px" width="44" height="46" viewBox="0 0 44 46" ><path d="M25.4 12.9L25.4 15.1L22.1 16.5L21.5 18.0L22.9 21.3L21.3 22.9L18.0 21.5L16.5 22.1L15.1 25.4L12.9 25.4L11.5 22.1L10.0 21.5L6.7 22.9L5.1 21.3L6.5 18.0L5.9 16.5L2.6 15.1L2.6 12.9L5.9 11.5L6.5 10.0L5.1 6.7L6.7 5.1L10.0 6.5L11.5 5.9L12.9 2.6L15.1 2.6L16.5 5.9L18.0 6.5L21.3 5.1L22.9 6.7L21.5 10.0L22.1 11.5z" fill="#e6e6e6" stroke="#c9c9c9" stroke-width=".8" stroke-linejoin="round"/><path d="M24.3 12.2L24.3 14.2L21.2 15.4L20.6 16.7L22.0 19.7L20.5 21.2L17.5 19.8L16.2 20.4L15.0 23.5L13.0 23.5L11.8 20.4L10.5 19.8L7.5 21.2L6.0 19.7L7.4 16.7L6.8 15.4L3.7 14.2L3.7 12.2L6.8 11.0L7.4 9.7L6.0 6.7L7.5 5.2L10.5 6.6L11.8 6.0L13.0 2.9L15.0 2.9L16.2 6.0L17.5 6.6L20.5 5.2L22.0 6.7L20.6 9.7L21.2 11.0z" fill="#f0f0f0" opacity=".8"/><circle cx="14" cy="14" r="6.0" fill="#e9e9e9" stroke="#d3d3d3" stroke-width=".7"/><circle cx="14" cy="14" r="2.9" fill="#fff" stroke="#c4c4c4" stroke-width="1"/><rect x="16.500" y="17" width="24.500" height="28" rx="4.500" fill="#f6f9fd" stroke="#b4c8dc" stroke-width="1.100"/><rect x="21.500" y="23" width="14.500" height="3" rx="1" fill="#6f97c2"/><rect x="21.500" y="29.500" width="14.500" height="3" rx="1" fill="#6f97c2"/><rect x="21.500" y="36" width="14.500" height="3" rx="1" fill="#6f97c2"/></svg>
<svg class="i" style="left:162.2px;top:307.0px" width="44" height="46" viewBox="0 0 44 46" ><path d="M38.4 23.4L38.4 26.6L33.7 28.5L32.8 30.8L34.8 35.5L32.5 37.8L27.8 35.8L25.5 36.7L23.6 41.4L20.4 41.4L18.5 36.7L16.2 35.8L11.5 37.8L9.2 35.5L11.2 30.8L10.3 28.5L5.6 26.6L5.6 23.4L10.3 21.5L11.2 19.2L9.2 14.5L11.5 12.2L16.2 14.2L18.5 13.3L20.4 8.6L23.6 8.6L25.5 13.3L27.8 14.2L32.5 12.2L34.8 14.5L32.8 19.2L33.7 21.5z" fill="#e6e6e6" stroke="#c9c9c9" stroke-width=".8" stroke-linejoin="round"/><path d="M37.2 22.7L37.2 25.7L32.7 27.5L31.9 29.5L33.8 33.9L31.7 36.0L27.3 34.1L25.3 34.9L23.5 39.4L20.5 39.4L18.7 34.9L16.7 34.1L12.3 36.0L10.2 33.9L12.1 29.5L11.3 27.5L6.8 25.7L6.8 22.7L11.3 20.9L12.1 18.9L10.2 14.5L12.3 12.4L16.7 14.3L18.7 13.5L20.5 9.0L23.5 9.0L25.3 13.5L27.3 14.3L31.7 12.4L33.8 14.5L31.9 18.9L32.7 20.9z" fill="#f0f0f0" opacity=".8"/><circle cx="22" cy="25" r="8.6" fill="#e9e9e9" stroke="#d3d3d3" stroke-width=".7"/><circle cx="22" cy="25" r="4.1" fill="#fff" stroke="#c4c4c4" stroke-width="1"/></svg>
<svg class="i" style="left:250.4px;top:307.0px" width="44" height="46" viewBox="0 0 44 46" ><ellipse cx="22" cy="25" rx="17.500" ry="19.500" fill="#eef2f6" stroke="#bcc5ce" stroke-width=".9"/><ellipse cx="22" cy="25" rx="14.800" ry="16.800" fill="url(#gHelp)"/><ellipse cx="22" cy="16.500" rx="11" ry="7.500" fill="#fff" opacity=".28"/><text x="22" y="35" text-anchor="middle" font-size="27" fill="#fff" stroke="#fff" stroke-width=".7" font-family="Liberation Sans,Noto Sans CJK JP,sans-serif">?</text></svg>
<svg class="i" style="left:338.6px;top:307.0px" width="44" height="46" viewBox="0 0 44 46" ><text x="2.500" y="35" font-size="24" fill="#f26a12" stroke="#f26a12" stroke-width=".4" font-family="Liberation Sans,Noto Sans CJK JP,sans-serif" textLength="7" lengthAdjust="spacingAndGlyphs">J</text><rect x="10.800" y="26.500" width="2.600" height="1.500" fill="#f26a12"/><g transform="translate(14.5 1.5) scale(0.98 1.21)"><circle cx="7" cy="5" r="4.500" fill="#f26a12"/><circle cx="20.500" cy="5" r="4.500" fill="#26307a"/><path d="M7 10.500c3.800 0 5 2.600 5.400 5.600l1.600 19.900h-4.600l-2.400-15-2.400 15h-4.600l1.600-19.900c.4-3 1.600-5.600 5.400-5.600z" fill="#f26a12"/><path d="M20.500 10.500c3.800 0 5 2.600 5.400 5.600l1.600 19.900h-4.600l-2.400-15-2.400 15h-4.600l1.600-19.900c.4-3 1.600-5.600 5.400-5.600z" fill="#26307a"/></g></svg>
<svg class="i" style="left:426.8px;top:307.0px" width="44" height="46" viewBox="0 0 44 46" ><path d="M18.500 8q-2.500-3.500-.5-4.500 2 1.500 4.500 0 2.500 1.500 4.500 0 2 1-.5 4.500l-1 4q9 8 7 21 -1 9-10.500 9T12 33q-2-13 7.500-21z" fill="#fff" stroke="#e8829a" stroke-width="1.500"/><path d="M18.500 12.500h8" stroke="#e8829a" stroke-width="1.500"/><rect x="2.500" y="27" width="10" height="2.600" rx="1.300" fill="#ea7f97"/><rect x="2.500" y="30.3" width="10" height="2.600" rx="1.300" fill="#ea7f97"/><rect x="2.500" y="33.6" width="10" height="2.600" rx="1.300" fill="#ea7f97"/><rect x="2.500" y="36.9" width="10" height="2.600" rx="1.300" fill="#ea7f97"/><rect x="2.500" y="40.2" width="10" height="2.600" rx="1.300" fill="#ea7f97"/><rect x="27" y="32" width="14.500" height="2.200" fill="#ea7f97"/><rect x="27" y="35" width="14.500" height="2.200" fill="#ea7f97"/><rect x="27" y="38" width="14.500" height="2.200" fill="#ea7f97"/><rect x="27" y="41" width="14.500" height="2.200" fill="#ea7f97"/><rect x="2" y="22" width="40" height="9" fill="#fff" opacity=".75"/><text x="22.500" y="30" text-anchor="middle" font-size="10.500" font-weight="bold" fill="#6e6e6e" font-family="Liberation Sans,Noto Sans CJK JP,sans-serif" textLength="35" lengthAdjust="spacingAndGlyphs">SAMPLE</text><rect x="2" y="31" width="40" height=".9" fill="#8a8a8a"/></svg>
<svg class="i" style="left:515.0px;top:307.0px" width="44" height="46" viewBox="0 0 44 46" ><rect x="4" y="1" width="36" height="45" fill="#fff" stroke="#cfcfcf" stroke-width=".8"/><text x="22" y="14.500" text-anchor="middle" font-size="8" font-weight="bold" fill="#1e7a2e" font-family="Liberation Sans,Noto Sans CJK JP,sans-serif" textLength="30" lengthAdjust="spacingAndGlyphs">たのめーる</text><rect x="7" y="17.500" width="30" height="1" fill="#e8772a"/><text x="12.500" y="32" text-anchor="middle" font-size="5.500" font-weight="bold" fill="#1e7a2e" font-family="Liberation Sans,Noto Sans CJK JP,sans-serif">TA</text><text x="12.500" y="38" text-anchor="middle" font-size="5.500" font-weight="bold" fill="#1e7a2e" font-family="Liberation Sans,Noto Sans CJK JP,sans-serif">NO</text><circle cx="27" cy="26" r="2.400" fill="#1e7a2e"/><path d="M22 29l5-1 5-3 1.500 1.500-4 4v4l3 5-2 1-3.500-5-3 5-2.200-1 3.200-6v-3l-3 1z" fill="#1e7a2e"/></svg>
<div class="abs ph" style="left:45px;top:397px;width:605px"></div>
<div class="abs pb" style="left:45px;top:422px;width:605px;height:157px"></div>
<div class="abs tb" style="left:54px;top:433px;width:587px;height:125.600px"><i class="g" style="top:30px;height:32.200px;border-top:1px solid #c6c6c6;border-bottom:1px solid #c6c6c6"></i><i class="g" style="top:92.300px;height:31.300px;border-top:1px solid #c6c6c6"></i></div>
<div class="abs ph" style="left:45px;top:591px;width:605px"></div>
<div class="abs pb" style="left:45px;top:616px;width:605px;height:120px"></div>
<div class="abs btn" style="left:534px;top:629.500px;width:15.5px;height:19px"></div><div class="abs btn" style="left:553px;top:629.500px;width:15.5px;height:19px"></div><div class="abs btn" style="left:573px;top:629.500px;width:28px;height:19px"></div><div class="abs btn" style="left:605px;top:629.500px;width:15.5px;height:19px"></div><div class="abs btn" style="left:625px;top:629.500px;width:15.5px;height:19px"></div><svg class="i" style="left:537.0px;top:634.5px" width="10" height="9" viewBox="0 0 10 9" ><path d="M4 0L0 4.500l4 4.500z" fill="#222"/><path d="M8.5 0L4.5 4.500l4 4.500z" fill="#222"/></svg><svg class="i" style="left:558.5px;top:634.5px" width="6" height="9" viewBox="0 0 6 9" ><path d="M4 0L0 4.500l4 4.500z" fill="#222"/></svg><svg class="i" style="left:611.0px;top:634.5px" width="6" height="9" viewBox="0 0 6 9" ><path d="M0 0l4 4.500-4 4.500z" fill="#222"/></svg><svg class="i" style="left:628.5px;top:634.5px" width="10" height="9" viewBox="0 0 10 9" ><path d="M0 0l4 4.500-4 4.500z" fill="#222"/><path d="M4.5 0l4 4.500-4 4.500z" fill="#222"/></svg><svg class="i" style="left:583.0px;top:655.0px" width="15" height="19" viewBox="0 0 15 19" ><rect x=".5" y="2.500" width="14" height="16" rx="1" fill="#dbe7f6" stroke="#2f63a8" stroke-width="1"/><rect x=".5" y="2.500" width="14" height="4.500" fill="#3a6cb4"/><rect x="3" y="0" width="1.500" height="4" fill="#8fa2b8"/><rect x="6.700" y="0" width="1.500" height="4" fill="#8fa2b8"/><rect x="10.400" y="0" width="1.500" height="4" fill="#8fa2b8"/><text x="7.500" y="16.300" text-anchor="middle" font-size="10.500" font-weight="bold" fill="#2f63a8" font-family="Liberation Sans,Noto Sans CJK JP,sans-serif" letter-spacing="-.5">1</text></svg><svg class="i" style="left:604.0px;top:655.0px" width="15" height="19" viewBox="0 0 15 19" ><rect x=".5" y="2.500" width="14" height="16" rx="1" fill="#dbe7f6" stroke="#2f63a8" stroke-width="1"/><rect x=".5" y="2.500" width="14" height="4.500" fill="#3a6cb4"/><rect x="3" y="0" width="1.500" height="4" fill="#8fa2b8"/><rect x="6.700" y="0" width="1.500" height="4" fill="#8fa2b8"/><rect x="10.400" y="0" width="1.500" height="4" fill="#8fa2b8"/><text x="7.500" y="16.300" text-anchor="middle" font-size="10.500" font-weight="bold" fill="#2f63a8" font-family="Liberation Sans,Noto Sans CJK JP,sans-serif" letter-spacing="-.5">7</text></svg><svg class="i" style="left:625.0px;top:655.0px" width="15" height="19" viewBox="0 0 15 19" ><rect x=".5" y="2.500" width="14" height="16" rx="1" fill="#dbe7f6" stroke="#2f63a8" stroke-width="1"/><rect x=".5" y="2.500" width="14" height="4.500" fill="#3a6cb4"/><rect x="3" y="0" width="1.500" height="4" fill="#8fa2b8"/><rect x="6.700" y="0" width="1.500" height="4" fill="#8fa2b8"/><rect x="10.400" y="0" width="1.500" height="4" fill="#8fa2b8"/><text x="7.500" y="16.300" text-anchor="middle" font-size="10.500" font-weight="bold" fill="#2f63a8" font-family="Liberation Sans,Noto Sans CJK JP,sans-serif" letter-spacing="-.5">31</text></svg>
<div class="abs" style="left:54px;top:682px;width:587.2px;height:25px;background:linear-gradient(#f7f7f7,#e3e3e3);border:1px solid #c9c9c9"></div>
<div class="abs" style="left:55px;top:683px;width:82.8px;height:23px;background:linear-gradient(#ffc94a,#ffe9a8)"></div>
<div class="abs" style="left:137.8px;top:683px;width:1px;height:37px;background:#c9c9c9"></div>
<div class="abs" style="left:221.5px;top:683px;width:1px;height:37px;background:#c9c9c9"></div>
<div class="abs" style="left:305.2px;top:683px;width:1px;height:37px;background:#c9c9c9"></div>
<div class="abs" style="left:389.0px;top:683px;width:1px;height:37px;background:#c9c9c9"></div>
<div class="abs" style="left:472.8px;top:683px;width:1px;height:37px;background:#c9c9c9"></div>
<div class="abs" style="left:556.5px;top:683px;width:1px;height:37px;background:#c9c9c9"></div>
<div class="abs" style="left:54px;top:706px;width:1px;height:14px;background:#c9c9c9"></div>
<div class="abs" style="left:640.2px;top:706px;width:1px;height:14px;background:#c9c9c9"></div>
<div class="abs" style="left:55.0px;top:708px;width:82.8px;height:14px;border:1px solid #b4dbe3;background:#fff"></div>
<div class="abs" style="left:138.8px;top:708px;width:82.8px;height:14px;border:1px solid #b4dbe3;background:#fff"></div>
<div class="abs" style="left:222.5px;top:708px;width:82.8px;height:14px;border:1px solid #b4dbe3;background:#fff"></div>
<div class="abs" style="left:473.8px;top:708px;width:82.8px;height:14px;border:1px solid #b4dbe3;background:#fff"></div>
<div class="abs" style="left:557.5px;top:708px;width:82.8px;height:14px;border:1px solid #b4dbe3;background:#fff"></div>
<div class="abs ph" style="left:663px;top:397px;width:289px"></div>
<div class="abs pb" style="left:663px;top:422px;width:289px;height:263.500px"></div>
<div class="abs tb" style="left:671px;top:433px;width:272px;height:242px"><i class="g" style="top:66px;height:89px;border-top:1px solid #c6c6c6;border-bottom:1px solid #c6c6c6"></i></div>
<div class="abs ph" style="left:663px;top:697px;width:289px"></div>
<div class="abs ph" style="left:965px;top:397px;width:290px;background:linear-gradient(#ee4040,#d91c1c);box-shadow:inset 0 -1px 0 rgba(150,10,10,.35)"></div>
<div class="abs pb" style="left:965px;top:422px;width:290px;height:148px"></div>
<svg class="i" style="left:1160.0px;top:425.0px" width="100" height="120" viewBox="0 0 100 120" ><defs><linearGradient id="gFl" x1="0" y1="0" x2="0" y2="1"><stop offset="0" stop-color="#f0541a"/><stop offset="1" stop-color="#f9a63a"/></linearGradient></defs><path d="M15 94q-8-12 2-33 1 11 6 15-1-7 4-9 0 8 5 13 3 7-3 14z" fill="url(#gFl)" stroke="#c4511a" stroke-width=".8"/><path d="M14 101l7-5 12 4-9 11-7-2z" fill="#ee7a1c" stroke="#2a1a08" stroke-width="1.200"/><path d="M21 96l18 5-11 10-4-1z" fill="#f4df8a" stroke="#2a1a08" stroke-width="1.200"/><path d="M42 41q-10 1-10 13 0 8 7 20 7 13 1 25-1 2-4 3" fill="none" stroke="#2a1a08" stroke-width="5.400"/><path d="M42 41q-10 1-10 13 0 8 7 20 7 13 1 25-1 2-4 3" fill="none" stroke="#f6b6c6" stroke-width="3"/><g transform="rotate(-27 63 74)"><rect x="51" y="44.500" width="24.500" height="58" rx="10" fill="#e3202e" stroke="#2a1010" stroke-width="1.800"/><rect x="54" y="52" width="3" height="44" rx="1.500" fill="#f4707a" opacity=".75"/><rect x="59" y="62" width="15" height="24" fill="#fbe9ea"/><rect x="61" y="66" width="9" height="9" fill="#f8b9a0"/><path d="M62.500 69l7 9M69.500 69l-7 9" stroke="#e43aa0" stroke-width="1.700"/><path d="M52 72h6M52 77h6M52 82h6M52 87h6M52.500 92h5" stroke="#2a1010" stroke-width="1.500"/></g><path d="M36 30.500l18.500-21 4.500 3-13 20" fill="none" stroke="#2a1a08" stroke-width="4.600" stroke-linejoin="round"/><path d="M36 30.500l18.500-21 4.500 3-13 20" fill="none" stroke="#f1e7a4" stroke-width="2.400" stroke-linejoin="round"/><path d="M52 36l18 6 4 8-3.500 1.500-3.500-6-16-4z" fill="#e8cf5c" stroke="#2a1a08" stroke-width="1.300"/><circle cx="49" cy="40.500" r="6.500" fill="#f5b5cd" stroke="#2a1010" stroke-width="1.600"/><circle cx="48.500" cy="40" r="2.300" fill="#d42a8a" stroke="#2a1010" stroke-width=".8"/><circle cx="39" cy="41" r="2.300" fill="#f3d98a" stroke="#2a1010" stroke-width="1"/></svg>
<div class="abs ph" style="left:965px;top:581px;width:290px;height:26px;background:linear-gradient(#fdaa33,#f5930f);box-shadow:inset 0 -1px 0 rgba(200,110,0,.3)"></div>
<div class="abs pb" style="left:965px;top:607px;width:290px;height:130px"></div>
<svg class="i" style="left:1262.0px;top:189.0px" width="18" height="32" viewBox="0 0 18 32" ><circle cx="17" cy="9" r="8" fill="#5aa6ea"/><rect x="1" y="11" width="18" height="19" fill="#fff1b0" stroke="#d8b24a" stroke-width="1"/><rect x="1" y="11" width="18" height="3.500" fill="#f6d56a"/><rect x="4" y="18" width="12" height="1.200" fill="#d8b24a"/><rect x="4" y="21.500" width="12" height="1.200" fill="#d8b24a"/><rect x="4" y="25" width="9" height="1.200" fill="#d8b24a"/></svg><div class="abs" style="left:1262px;top:231.5px;width:18px;height:30px;background:#c9d7f6;border:1px solid #8fa9e6;border-right:none"></div><div class="abs" style="left:1262px;top:231.5px;width:8px;height:30px;background:#3f73dc"></div><div class="abs" style="left:1262px;top:271.7px;width:18px;height:30px;background:#dcefc2;border:1px solid #a6cc6c;border-right:none"></div><div class="abs" style="left:1262px;top:271.7px;width:8px;height:30px;background:#6fa81c"></div><div class="abs" style="left:1262px;top:311.9px;width:18px;height:30px;background:#fcdcb0;border:1px solid #f4bd72;border-right:none"></div><div class="abs" style="left:1262px;top:311.9px;width:8px;height:30px;background:#f9a127"></div><div class="abs" style="left:1262px;top:352.1px;width:18px;height:30px;background:#fbd3d6;border:1px solid #f3b3b8;border-right:none"></div><div class="abs" style="left:1262px;top:352.1px;width:8px;height:30px;background:#f79aa0"></div><div class="abs" style="left:1262px;top:392.3px;width:18px;height:30px;background:#f6b9bc;border:1px solid #ec8a8e;border-right:none"></div><div class="abs" style="left:1262px;top:392.3px;width:8px;height:30px;background:#e8454b"></div><div class="abs" style="left:1262px;top:432.5px;width:18px;height:30px;background:#dcdcdc;border:1px solid #b4b4b4;border-right:none"></div><div class="abs" style="left:1262px;top:432.5px;width:8px;height:30px;background:#8e8e8e"></div><div class="abs" style="left:1262px;top:472.500px;width:18px;height:31px;background:linear-gradient(90deg,#cdcdcd 0,#cdcdcd 7px,#ececec 7px)"></div><svg class="i" style="left:1263.0px;top:476.0px" width="17" height="24" viewBox="0 0 17 24" ><path d="M3 20l2-6 10-12 4 3-10 12z" fill="#f2a43a" stroke="#a9651a" stroke-width=".8"/><path d="M3 20l2-6 4 3z" fill="#f6dfb8"/><path d="M13 4l4 3 2-2.500-4-3z" fill="#d9534f"/></svg>
<div class="abs" style="left:0;top:718.500px;width:1280px;height:1.500px;background:linear-gradient(90deg,#1c1c1c 0,#1c1c1c 40px,#7d7d82 40px,#7d7d82 400px,#222 400px,#222 420px,#8a8a90 420px,#8a8a90 920px,#2a2a2a 920px,#2a2a2a 1240px,#8a8a90 1240px)"></div>
<div class="t" style="left:663.5px;top:7.5px;font-size:10.5px;color:#111"><span>(選んでください)</span></div>
<div class="t" style="left:783.5px;top:7.5px;font-size:10.5px;color:#111"><span>検索</span></div>
<div class="t" style="left:1197.7px;top:7.0px;color:#fff"><span style="letter-spacing:-0.20px">日本橋　太郎</span></div>
<div class="t" style="left:63.0px;top:43.0px;color:#fff"><span style="letter-spacing:-0.02px">Ｊ－ＭＯＴＴＯ管理者 さんから「J-MOTTOへようこそ」が届きました。</span></div>
<div class="t" style="left:1012.5px;top:42.5px;color:#fff"><span style="letter-spacing:0.64px">2023年04月19日(水) 15:57</span></div>
<div class="t c u" style="left:-51.5px;width:300px;top:87.5px;color:#1a66c4"><span style="letter-spacing:-0.50px">共通</span></div>
<div class="t c u" style="left:66.6px;width:300px;top:87.5px;color:#1a66c4"><span>社内報</span></div>
<div class="t c u" style="left:184.7px;width:300px;top:87.5px;color:#1a66c4"><span>総務ポータル</span></div>
<div class="t c u" style="left:302.8px;width:300px;top:87.5px;color:#1a66c4"><span style="letter-spacing:-0.50px">個人</span></div>
<div class="t" style="left:50.0px;top:135.5px;color:#fff"><span style="letter-spacing:-0.33px">メニュー</span></div>
<div class="t c ml" style="left:-54.0px;width:300px;top:214.0px;font-size:9.5px;color:#333"><span>スケジュール</span></div>
<div class="t c ml" style="left:34.2px;width:300px;top:214.0px;font-size:9.5px;color:#333"><span>設備予約</span></div>
<div class="t c" style="left:122.4px;width:300px;top:214.0px;font-size:9.5px;color:#333"><span style="letter-spacing:-0.06px">ToDo</span></div>
<div class="t c ml" style="left:210.6px;width:300px;top:214.0px;font-size:9.5px;color:#333"><span>伝言・所在</span></div>
<div class="t c ml" style="left:298.8px;width:300px;top:214.0px;font-size:9.5px;color:#333"><span>インフォメーション</span></div>
<div class="t c ml" style="left:387.0px;width:300px;top:214.0px;font-size:9.5px;color:#333"><span>回覧・レポート</span></div>
<div class="t c ml" style="left:475.2px;width:300px;top:214.0px;font-size:9.5px;color:#333"><span>ワークフロー</span></div>
<div class="t c ml" style="left:563.4px;width:300px;top:214.0px;font-size:9.5px;color:#333"><span>文書管理</span></div>
<div class="t c ml" style="left:651.6px;width:300px;top:214.0px;font-size:9.5px;color:#333"><span>ウェブメール</span></div>
<div class="t c" style="left:739.8px;width:300px;top:214.0px;font-size:9.5px;color:#333"><span style="letter-spacing:-0.47px">ウェブメールIMAP</span></div>
<div class="t c ml" style="left:828.0px;width:300px;top:214.0px;font-size:9.5px;color:#333"><span>タイムカード</span></div>
<div class="t c ml" style="left:916.2px;width:300px;top:214.0px;font-size:9.5px;color:#333"><span>来訪者管理</span></div>
<div class="t c ml" style="left:1004.4px;width:300px;top:214.0px;font-size:9.5px;color:#333"><span>議事録</span></div>
<div class="t c ml" style="left:-54.0px;width:300px;top:283.0px;font-size:9.5px;color:#333"><span>アドレス帳</span></div>
<div class="t c ml" style="left:34.2px;width:300px;top:283.0px;font-size:9.5px;color:#333"><span>アンケート</span></div>
<div class="t c ml" style="left:122.4px;width:300px;top:283.0px;font-size:9.5px;color:#333"><span>電子会議室</span></div>
<div class="t c ml" style="left:210.6px;width:300px;top:283.0px;font-size:9.5px;color:#333"><span>購買予約</span></div>
<div class="t c ml" style="left:298.8px;width:300px;top:283.0px;font-size:9.5px;color:#333"><span>プロジェクト管理</span></div>
<div class="t c ml" style="left:387.0px;width:300px;top:283.0px;font-size:9.5px;color:#333"><span>仮払精算</span></div>
<div class="t c ml" style="left:475.2px;width:300px;top:283.0px;font-size:9.5px;color:#333"><span>備品管理</span></div>
<div class="t c ml" style="left:563.4px;width:300px;top:283.0px;font-size:9.5px;color:#333"><span>メモパッド</span></div>
<div class="t c ml" style="left:651.6px;width:300px;top:283.0px;font-size:9.5px;color:#333"><span>プレゼンス</span></div>
<div class="t c ml" style="left:739.8px;width:300px;top:283.0px;font-size:9.5px;color:#333"><span>キャビネット</span></div>
<div class="t c ml" style="left:828.0px;width:300px;top:283.0px;font-size:9.5px;color:#333"><span>利用者名簿</span></div>
<div class="t c ml" style="left:916.2px;width:300px;top:283.0px;font-size:9.5px;color:#333"><span>安否確認</span></div>
<div class="t c ml" style="left:1004.4px;width:300px;top:283.0px;font-size:9.5px;color:#333"><span>アラーム</span></div>
<div class="t c ml" style="left:-54.0px;width:300px;top:352.0px;font-size:9.5px;color:#333"><span>設定メニュー</span></div>
<div class="t c ml" style="left:34.2px;width:300px;top:352.0px;font-size:9.5px;color:#333"><span>管理者設定</span></div>
<div class="t c ml" style="left:122.4px;width:300px;top:352.0px;font-size:9.5px;color:#333"><span>ヘルプ</span></div>
<div class="t c ml" style="left:210.6px;width:300px;top:352.0px;font-size:9.5px;color:#333"><span>会社ホームページ</span></div>
<div class="t c" style="left:298.8px;width:300px;top:352.0px;font-size:9.5px;color:#333"><span style="letter-spacing:-0.55px">（Web給与明細）</span></div>
<div class="t c" style="left:387.0px;width:300px;top:352.0px;font-size:9.5px;color:#333"><span style="letter-spacing:-0.75px">（たのめーる）</span></div>
<div class="t u" style="left:50.0px;top:399.5px;color:#fff"><span style="letter-spacing:-0.06px">インフォメーション</span></div>
<div class="t b u" style="left:84.0px;top:438.2px;color:#1a66c4"><span style="letter-spacing:0.25px">J-MOTTOへようこそ</span></div>
<div class="t b" style="left:313.7px;top:438.2px;color:#222"><span style="letter-spacing:-0.11px">Ｊ－ＭＯＴＴＯ管理者</span></div>
<div class="t b" style="left:543.0px;top:438.2px;color:#222"><span style="letter-spacing:0.50px">2016/11/01 ～</span></div>
<div class="t b u" style="left:84.0px;top:469.4px;color:#1a66c4"><span style="letter-spacing:0.02px">本社ビル一斉停電のお知らせ</span></div>
<div class="t b" style="left:313.7px;top:469.4px;color:#222"><span>総務部</span></div>
<div class="t b" style="left:543.0px;top:469.4px;color:#222"><span style="letter-spacing:0.44px">2016/10/27 ～</span></div>
<div class="t b u" style="left:84.0px;top:500.6px;color:#1a66c4"><span style="letter-spacing:0.03px">人事異動のお知らせ</span></div>
<div class="t b" style="left:313.7px;top:500.6px;color:#222"><span style="letter-spacing:0.26px">浅草　美香 [人事部]</span></div>
<div class="t b" style="left:543.0px;top:500.6px;color:#222"><span style="letter-spacing:0.44px">2016/10/24 ～</span></div>
<div class="t b u" style="left:84.0px;top:531.8px;color:#1a66c4"><span style="letter-spacing:0.02px">福岡支社設立のお知らせ</span></div>
<div class="t b" style="left:313.7px;top:531.8px;color:#222"><span style="letter-spacing:0.28px">日本橋　太郎 [東京営業部]</span></div>
<div class="t b" style="left:543.0px;top:531.8px;color:#222"><span style="letter-spacing:0.44px">2016/10/01 ～</span></div>
<div class="t u" style="left:50.0px;top:593.0px;color:#fff"><span style="letter-spacing:0.22px">スケジュール(個人週間)</span></div>
<div class="t b" style="left:58.5px;top:627.5px;font-size:13px;color:#222"><span style="letter-spacing:0.57px">2023/04/19 ～ 2023/05/02</span></div>
<div class="t" style="left:577.0px;top:628.5px;font-size:10px;color:#222"><span style="letter-spacing:-1.00px">今日</span></div>
<div class="t c u" style="left:-54.1px;width:300px;top:684.5px;font-size:12px;color:#333"><span style="letter-spacing:0.04px">19(水)</span></div>
<div class="t c u" style="left:29.6px;width:300px;top:684.5px;font-size:12px;color:#333"><span style="letter-spacing:0.04px">20(木)</span></div>
<div class="t c u" style="left:113.4px;width:300px;top:684.5px;font-size:12px;color:#333"><span style="letter-spacing:0.04px">21(金)</span></div>
<div class="t c u" style="left:197.1px;width:300px;top:684.5px;font-size:12px;color:#2a62ad"><span style="letter-spacing:0.04px">22(土)</span></div>
<div class="t c u" style="left:280.9px;width:300px;top:684.5px;font-size:12px;color:#d02020"><span style="letter-spacing:0.04px">23(日)</span></div>
<div class="t c u" style="left:364.6px;width:300px;top:684.5px;font-size:12px;color:#333"><span style="letter-spacing:0.04px">24(月)</span></div>
<div class="t c u" style="left:448.4px;width:300px;top:684.5px;font-size:12px;color:#333"><span style="letter-spacing:0.04px">25(火)</span></div>
<div class="t" style="left:58.5px;top:706.5px;font-size:12px;color:#333"><span style="letter-spacing:0.44px">09:00 - 09:30</span></div>
<div class="t" style="left:142.2px;top:706.5px;font-size:12px;color:#333"><span style="letter-spacing:0.44px">09:00 - 12:00</span></div>
<div class="t" style="left:226.0px;top:706.5px;font-size:12px;color:#333"><span style="letter-spacing:0.44px">16:00 - 17:00</span></div>
<div class="t" style="left:477.2px;top:706.5px;font-size:12px;color:#333"><span style="letter-spacing:0.44px">09:00 - 12:00</span></div>
<div class="t" style="left:561.0px;top:706.5px;font-size:12px;color:#333"><span style="letter-spacing:0.51px">09:30 - 11:30</span></div>
<div class="t u" style="left:667.5px;top:399.5px;color:#fff"><span style="letter-spacing:-0.14px">アンケート</span></div>
<div class="t" style="left:676.0px;top:457.0px;font-size:10px;color:#333"><span style="letter-spacing:0.52px">2016/11/08</span></div>
<div class="t" style="left:751.7px;top:437.0px;color:#333"><span><span class="u" style="color:#1a66c4">職業性ストレス簡</span></span></div>
<div class="t" style="left:751.7px;top:457.0px;color:#333"><span style="letter-spacing:0.60px"><span class="u" style="color:#1a66c4">易調査</span>(2026/12</span></div>
<div class="t" style="left:751.7px;top:476.7px;color:#333"><span style="letter-spacing:0.81px">/31締切)</span></div>
<div class="t" style="left:849.7px;top:457.0px;color:#333"><span style="letter-spacing:-0.08px">安全衛生委員会</span></div>
<div class="t" style="left:676.0px;top:534.0px;font-size:10px;color:#333"><span style="letter-spacing:0.52px">2016/11/07</span></div>
<div class="t" style="left:751.7px;top:504.5px;color:#333"><span style="letter-spacing:0.12px"><span class="u" style="color:#1a66c4">コンプライアンス</span></span></div>
<div class="t" style="left:751.7px;top:524.2px;color:#333"><span style="letter-spacing:0.05px"><span class="u" style="color:#1a66c4">遵守チェックアン</span></span></div>
<div class="t" style="left:751.7px;top:544.0px;color:#333"><span style="letter-spacing:0.60px"><span class="u" style="color:#1a66c4">ケート</span>(2026/12</span></div>
<div class="t" style="left:751.7px;top:563.7px;color:#333"><span style="letter-spacing:0.81px">/31締切)</span></div>
<div class="t" style="left:849.7px;top:524.2px;color:#333"><span style="letter-spacing:0.14px">コンプライアンス</span></div>
<div class="t" style="left:849.7px;top:544.0px;color:#333"><span>委員会</span></div>
<div class="t" style="left:676.0px;top:621.0px;font-size:10px;color:#333"><span style="letter-spacing:0.52px">2016/11/07</span></div>
<div class="t" style="left:751.7px;top:591.5px;color:#333"><span><span class="u" style="color:#1a66c4">新しい椅子の導入</span></span></div>
<div class="t" style="left:751.7px;top:611.2px;color:#333"><span style="letter-spacing:0.05px"><span class="u" style="color:#1a66c4">に関するアンケー</span></span></div>
<div class="t" style="left:751.7px;top:631.0px;color:#333"><span style="letter-spacing:0.86px"><span class="u" style="color:#1a66c4">ト</span>(2026/12/31</span></div>
<div class="t" style="left:751.7px;top:650.7px;color:#333"><span style="letter-spacing:0.16px">締切)</span></div>
<div class="t" style="left:849.7px;top:621.0px;color:#333"><span>総務部</span></div>
<div class="t u" style="left:667.5px;top:700.3px;color:#fff"><span style="letter-spacing:-0.20px">ワークフロー</span></div>
<div class="t" style="left:969.5px;top:399.5px;color:#fff"><span style="letter-spacing:-0.13px">重要なお知らせ</span></div>
<div class="t b" style="left:974.0px;top:437.0px;font-size:15.5px;color:#e01212"><span style="letter-spacing:0.10px">防災訓練のお知らせ</span></div>
<div class="t" style="left:974.0px;top:460.5px;color:#222"><span>来週月曜日10時より、全社防災訓練を</span></div>
<div class="t" style="left:974.0px;top:480.5px;color:#222"><span style="letter-spacing:0.27px">行います。</span></div>
<div class="t" style="left:974.0px;top:500.7px;color:#222"><span style="letter-spacing:-0.06px">当日は「安否確認」の訓練も行います</span></div>
<div class="t" style="left:974.0px;top:520.7px;color:#222"><span style="letter-spacing:0.22px">ので、</span></div>
<div class="t" style="left:974.0px;top:540.4px;color:#222"><span style="letter-spacing:0.05px"><span class="u" style="color:#5b3aa8">こちら</span>から緊急連絡先の更新をお願いします。</span></div>
<div class="t" style="left:969.0px;top:584.0px;color:#fff"><span style="letter-spacing:-0.08px">【オンラインデモをご利用中のお客様へ】</span></div>
<div class="t b" style="left:974.0px;top:616.2px;color:#222"><span style="letter-spacing:0.12px">J-MOTTOグループウェア動画セミナー</span></div>
<div class="t" style="left:974.0px;top:637.3px;color:#444"><span style="letter-spacing:0.20px">「この機能はどう使うの？」「こんな使い方はでき</span></div>
<div class="t" style="left:974.0px;top:656.8px;color:#444"><span style="letter-spacing:-0.06px">る？」など、もっと詳しく知りたい方は無料の動画セ</span></div>
<div class="t" style="left:974.0px;top:676.5px;color:#444"><span>ミナーをご覧ください！</span></div>
<svg class="i" style="left:0;top:0" width="1280" height="720"><line x1="1151" y1="20" x2="840" y2="95.500" stroke="#ee0010" stroke-width="4.200"/><rect x="1151.300" y="-0.700" width="52.400" height="41.400" fill="none" stroke="#ee0010" stroke-width="4.500"/></svg>
<div class="abs" style="left:480px;top:95px;width:718px;height:121px;background:#fff;border:1.5px solid #000"></div>
<div class="t" style="left:499px;top:120.5px;font-size:27px;line-height:32px;height:32px;color:#111"><span style="letter-spacing:0px">チェックインを行うと、</span></div>
<div class="t" style="left:499px;top:151.8px;font-size:27px;line-height:32px;height:32px;color:#111"><span style="letter-spacing:0px">ユーザーのアイコンにチェックマークがつきます。</span></div>
</body>
</html>
